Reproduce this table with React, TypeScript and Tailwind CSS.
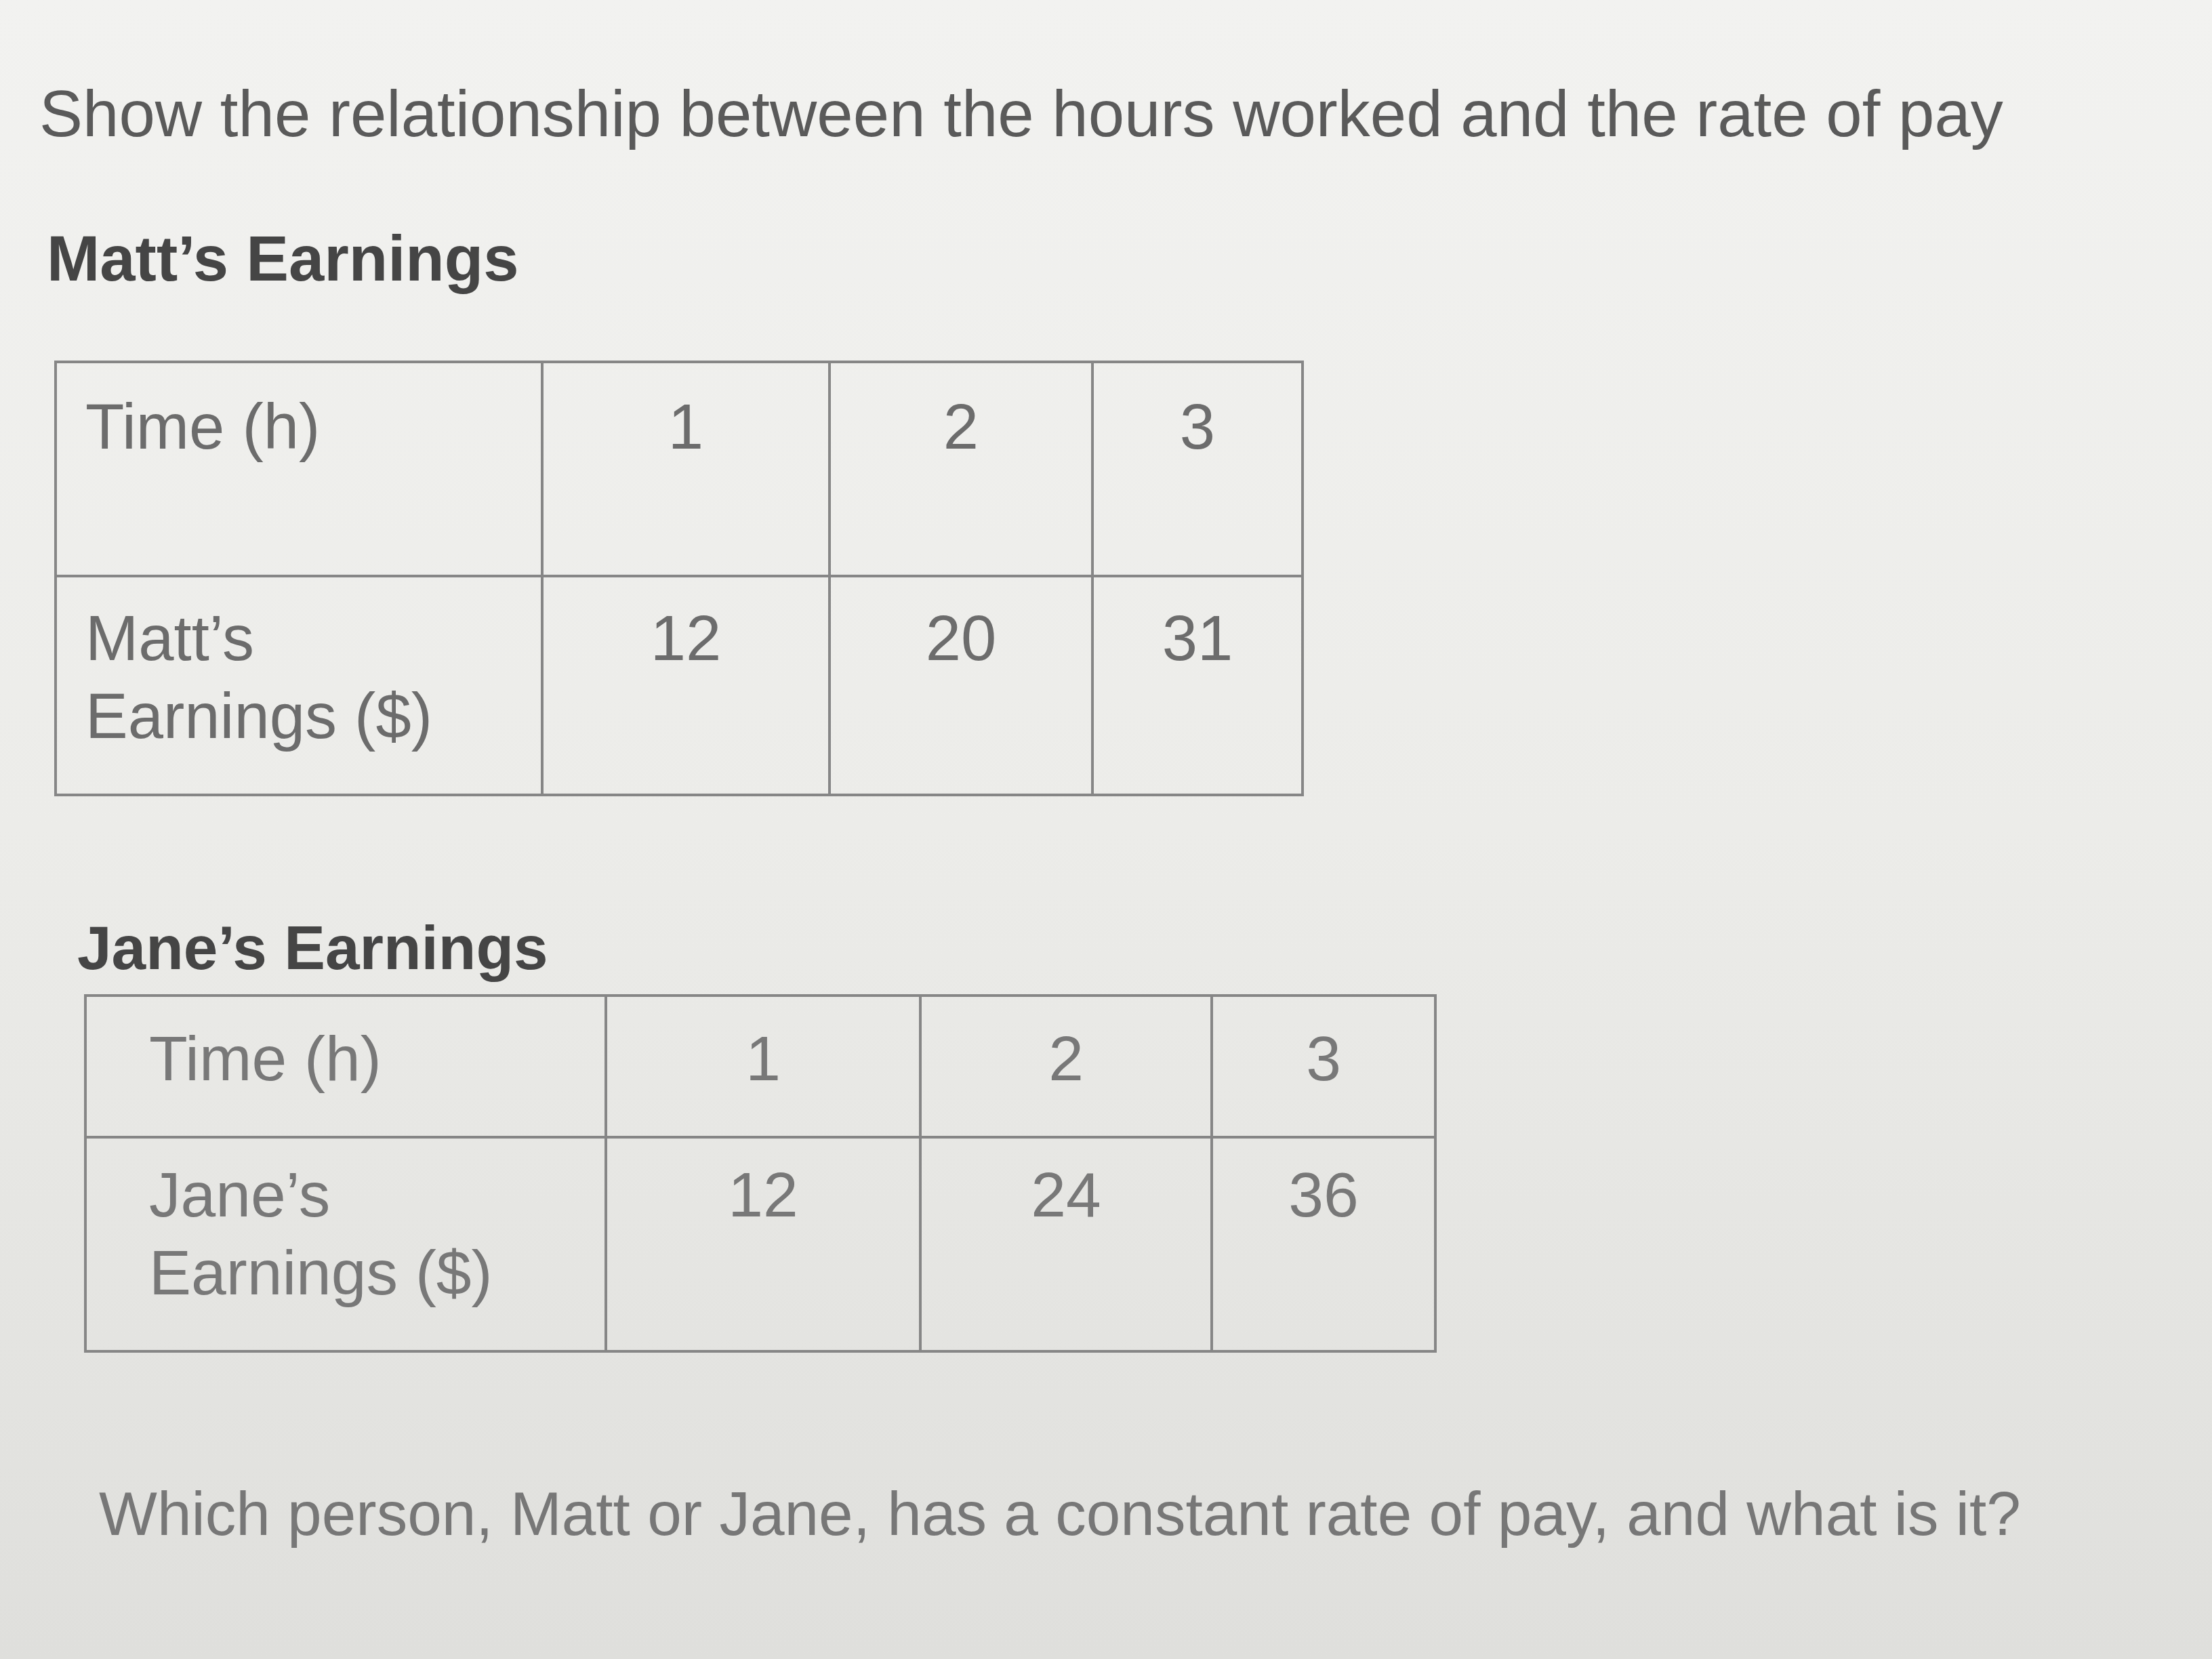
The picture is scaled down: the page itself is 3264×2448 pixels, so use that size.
export default function App() {
  const cell = "border-[4px] border-[#868686] align-top";

  return (
    <main className="min-h-screen w-full bg-linear-to-b from-[#f2f2f0] via-[#ecece9] to-[#dfdfdc] pt-[120px] pl-[58px] font-['Liberation_Sans',Arial,sans-serif]">
      <p className="text-[96px] leading-none text-[#5a5a5a]">
        Show the relationship between the hours worked and the rate of pay
      </p>

      <h2 className="mt-[119px] ml-[11px] text-[94px] leading-none font-bold text-[#454545]">
        Matt’s Earnings
      </h2>

      {/* table 1 */}
      <table className="mt-[103px] ml-[22px] w-[1840px] table-fixed border-collapse text-[94px] leading-[115px] text-[#6c6c6c]">
        <colgroup>
          <col className="w-[718px]" />
          <col className="w-[424px]" />
          <col className="w-[388px]" />
          <col className="w-[310px]" />
        </colgroup>
        <tbody>
          <tr className="h-[316px]">
            <td className={`${cell} pl-[42px] pt-[36px]`}>Time (h)</td>
            <td className={`${cell} pt-[36px] text-center`}>1</td>
            <td className={`${cell} pt-[36px] text-center`}>2</td>
            <td className={`${cell} pt-[36px] text-center`}>3</td>
          </tr>
          <tr className="h-[323px]">
            <td className={`${cell} pl-[42px] pt-[32px]`}>
              Matt’s
              <br />
              Earnings ($)
            </td>
            <td className={`${cell} pt-[32px] text-center`}>12</td>
            <td className={`${cell} pt-[32px] text-center`}>20</td>
            <td className={`${cell} pt-[32px] text-center`}>31</td>
          </tr>
        </tbody>
      </table>

      <h2 className="mt-[178px] ml-[56px] text-[91px] leading-none font-bold text-[#454545]">
        Jane’s Earnings
      </h2>

      {/* table 2 */}
      <table className="mt-[23px] ml-[66px] w-[1992px] table-fixed border-collapse text-[93px] leading-[115px] text-[#787878]">
        <colgroup>
          <col className="w-[768px]" />
          <col className="w-[464px]" />
          <col className="w-[430px]" />
          <col className="w-[330px]" />
        </colgroup>
        <tbody>
          <tr className="h-[209px]">
            <td className={`${cell} pl-[92px] pt-[34px]`}>Time (h)</td>
            <td className={`${cell} pt-[34px] text-center`}>1</td>
            <td className={`${cell} pt-[34px] text-center`}>2</td>
            <td className={`${cell} pt-[34px] text-center`}>3</td>
          </tr>
          <tr className="h-[316px]">
            <td className={`${cell} pl-[92px] pt-[26px]`}>
              Jane’s
              <br />
              Earnings ($)
            </td>
            <td className={`${cell} pt-[26px] text-center`}>12</td>
            <td className={`${cell} pt-[26px] text-center`}>24</td>
            <td className={`${cell} pt-[26px] text-center`}>36</td>
          </tr>
        </tbody>
      </table>

      <p className="mt-[192px] ml-[88px] text-[91px] leading-none text-[#777777]">
        Which person, Matt or Jane, has a constant rate of pay, and what is it?
      </p>
    </main>
  );
}
